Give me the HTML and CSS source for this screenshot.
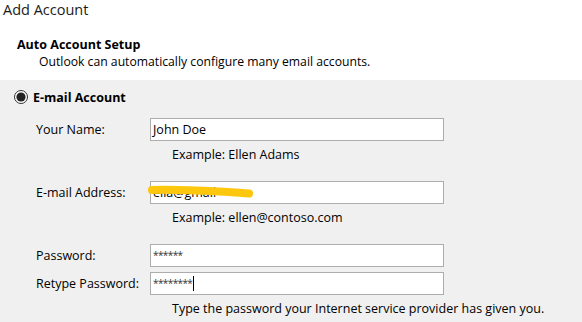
FILE: index.html
```html
<!DOCTYPE html>
<html lang="en">
<head>
<meta charset="utf-8">
<title>Add Account</title>
<link rel="stylesheet" href="styles.css">
</head>
<body>
<div class="window">
  <div class="title">Add Account</div>
  <div class="setup">
    <div class="setup-head">Auto Account Setup</div>
    <div class="setup-desc">Outlook can automatically configure many email accounts.</div>
  </div>
  <div class="panel">
    <div class="radio-row">
      <svg class="radio" width="14" height="14" viewBox="0 0 14 14">
        <circle cx="7" cy="7" r="6.5" fill="#fff" stroke="#333" stroke-width="1"/>
        <circle cx="7" cy="7" r="4.6" fill="#222"/>
      </svg>
      <span class="radio-label">E-mail Account</span>
    </div>
    <div class="form">
      <div class="field first">
        <span class="label">Your Name:</span>
        <div class="input">John Doe</div>
      </div>
      <div class="hint">Example: Ellen Adams</div>
      <div class="field gap">
        <span class="label">E-mail Address:</span>
        <div class="input masked">ella@gmail
          <svg class="marker" width="106" height="14" viewBox="0 0 106 14">
            <path d="M4 5 C30 4 60 6 80 7 C90 7.5 96 8 101 8.5" fill="none" stroke="#fdc70e" stroke-width="8" stroke-linecap="round"/>
          </svg>
        </div>
      </div>
      <div class="hint">Example: ellen@contoso.com</div>
      <div class="field gap">
        <span class="label">Password:</span>
        <div class="input pw">******</div>
      </div>
      <div class="field tight">
        <span class="label">Retype Password:</span>
        <div class="input pw">********<span class="caret"></span></div>
      </div>
      <div class="hint">Type the password your Internet service provider has given you.</div>
    </div>
  </div>
</div>
</body>
</html>
```
FILE: styles.css
```css
html, body {
  margin: 0;
  padding: 0;
  background: #ffffff;
}
body {
  font-family: "Open Sans", "Noto Sans", sans-serif;
  color: #000;
  width: 582px;
  height: 322px;
  overflow: hidden;
}
.window {
  display: flex;
  flex-direction: column;
  height: 322px;
}
.title {
  padding-left: 3px;
  height: 20px;
  line-height: 20px;
  font-size: 14.5px;
  color: #1b1b1b;
}
.setup {
  padding-left: 17px;
  padding-top: 16px;
  height: 44px;
}
.setup-head {
  font-weight: 700;
  font-size: 12.5px;
  line-height: 18px;
}
.setup-desc {
  padding-left: 22px;
  font-size: 12.2px;
  line-height: 16px;
}
.panel {
  flex: 1;
  background: #f0f0f0;
  padding-top: 8px;
}
.radio-row {
  display: flex;
  align-items: center;
  padding-left: 14px;
  height: 18px;
}
.radio {
  display: block;
  flex: none;
}
.radio-label {
  margin-left: 5px;
  font-weight: 700;
  font-size: 12.5px;
}
.form {
  display: flex;
  flex-direction: column;
  padding-left: 36px;
  font-size: 12.5px;
}
.field {
  display: flex;
  align-items: center;
  height: 23px;
}
.field.first { margin-top: 12px; }
.field.gap { margin-top: 17px; }
.field.tight { margin-top: 5px; }
.label {
  width: 114px;
  flex: none;
}
.input {
  position: relative;
  box-sizing: border-box;
  width: 294px;
  height: 23px;
  border: 1px solid #adadad;
  background: #fff;
  padding-left: 2px;
  line-height: 21px;
  white-space: nowrap;
}
.input.pw {
  font-size: 10px;
  letter-spacing: -0.6px;
  color: #333;
  display: flex;
  align-items: center;
}
.caret {
  display: inline-block;
  width: 1px;
  height: 15px;
  background: #000;
  margin-left: 1px;
}
.marker {
  position: absolute;
  left: -3px;
  top: 3px;
}
.hint {
  margin-top: 5px;
  padding-left: 136px;
  line-height: 18px;
}
```
